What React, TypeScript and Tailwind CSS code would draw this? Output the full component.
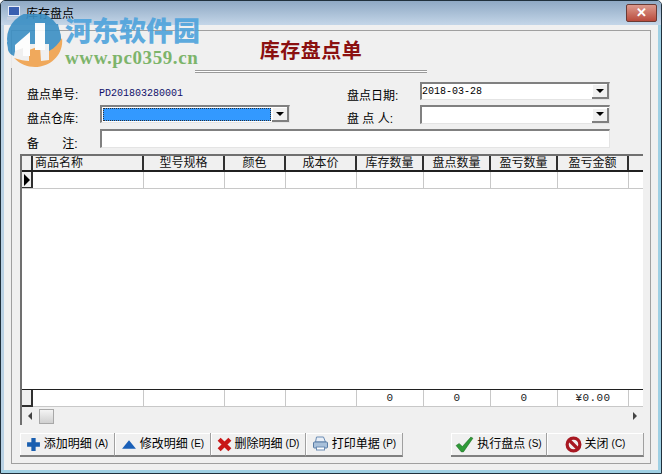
const font = "font-['Liberation_Sans','Noto_Sans_CJK_SC',sans-serif]";

const columns = [
  { label: "商品名称", width: "w-[111px]", align: "text-left pl-[2px]" },
  { label: "型号规格", width: "w-[81px]" },
  { label: "颜色", width: "w-[61px]" },
  { label: "成本价", width: "w-[71px]" },
  { label: "库存数量", width: "w-[67px]", total: "0" },
  { label: "盘点数量", width: "w-[67px]", total: "0" },
  { label: "盈亏数量", width: "w-[67px]", total: "0" },
  { label: "盈亏金额", width: "w-[71px]", total: "¥0.00" },
  { label: "", width: "w-[14px]" },
];

function DropArrow() {
  return (
    <span className="flex h-[15px] w-[17px] shrink-0 items-center justify-center border-r-2 border-b-2 border-r-[#808080] border-b-[#808080] bg-[#f0f0f0] shadow-[inset_1px_1px_0_#fff]">
      <span className="h-0 w-0 border-x-[4px] border-t-[4px] border-x-transparent border-t-black" />
    </span>
  );
}

function Sunken({ className, children }: { className: string; children?: React.ReactNode }) {
  return (
    <div className={`flex items-center border-t-2 border-l-2 border-t-[#808080] border-l-[#808080] border-r border-b border-r-[#e4e4e4] border-b-[#e4e4e4] bg-white ${className}`}>
      {children}
    </div>
  );
}

function Label({ text, className = "" }: { text: string; className?: string }) {
  return <span className={`w-[73px] shrink-0 whitespace-pre text-[12px] leading-[14px] text-black ${className}`}>{text}</span>;
}

function ToolButton({ icon, text, hotkey, width }: { icon: React.ReactNode; text: string; hotkey: string; width: string }) {
  return (
    <button className={`flex h-[24px] items-center justify-center gap-[3px] border-r border-b-2 border-r-[#a0a0a0] border-b-[#808080] bg-[#f0f0f0] shadow-[inset_1px_1px_0_#fff] ${width}`}>
      {icon}
      <span className="whitespace-pre text-[12px] leading-none text-black">{text}</span>
      <span className="whitespace-pre text-[10px] leading-none text-black">{hotkey}</span>
    </button>
  );
}

function Watermark() {
  return (
    <div className="pointer-events-none absolute top-[13px] left-[4px] flex items-start gap-[2px] opacity-90">
      <svg width="58" height="54" viewBox="0 0 58 54">
        <circle cx="29" cy="25" r="27" fill="#3b8fc4" />
        <path d="M0 30h58v24H0Z" fill="#f0f0f0" />
        <path d="M3 36c0-4-1-5-1-8h10l-3 14C6 41 4 39 3 36Z" fill="#3b8fc4" />
        <path d="M44 10h9l3 14-2 12-10 2Z" fill="#3b8fc4" />
        <path d="M57 24c2 16-11 29-27 29-8 0-15-3-21-9 6 2 11 3 15 3V36l11-4 1 15 8-1v-9c6-3 10-8 13-13Z" fill="#f0a24c" />
        <path d="M10 31 25 18v24h-7v-8l-8 3Z" fill="#fff" />
        <path d="M30 9h10v27H30Z" fill="#fff" />
      </svg>
      <div className="mt-[1px] flex flex-col">
        <span className="font-['Noto_Sans_CJK_SC',sans-serif] text-[27px] leading-[30px] font-black text-[#4ea3dc]">河东软件园</span>
        <span className="mt-[3px] font-['Liberation_Serif',serif] text-[19px] leading-[20px] font-bold tracking-[0.6px] text-[#71ae5c]">www.pc0359.cn</span>
      </div>
    </div>
  );
}

export default function App() {
  return (
    <div className={`relative flex h-[474px] w-[662px] flex-col overflow-hidden rounded-t-[5px] border border-[#20303c] bg-[#f0f0f0] shadow-[inset_-3px_-3px_0_#9fd0e4,inset_3px_0_0_#b9d1e4] ${font}`}>
      {/* Title bar */}
      <div className="flex h-[24px] shrink-0 items-center bg-gradient-to-b from-[#8fa9c4] to-[#c4d6e8] pr-[4px] pl-[5px]">
        <svg width="16" height="16" viewBox="0 0 16 16">
          <rect x="2.5" y="1.5" width="11" height="9" fill="#3a5fb0" stroke="#e6ebf8" />
          <path d="M1 12h14l1 3H1z" fill="#c7cfe0" />
        </svg>
        <span className="mt-[2px] ml-[4px] text-[12px] leading-none text-black">库存盘点</span>
        <button className="mt-[-1px] ml-auto flex h-[18px] w-[31px] items-center justify-center rounded-[2px] border border-[#6a3a34] bg-gradient-to-b from-[#dc9a8e] to-[#b84a3c] font-['Liberation_Sans',sans-serif] text-[13px] leading-none font-bold text-white">
          ✕
        </button>
      </div>

      {/* Form body */}
      <div className="flex flex-1 flex-col px-[10px] pt-[5px] pb-[9px]">
        <div className="flex flex-1 flex-col border border-[#a0a0a0] pr-[7px] pl-[8px]">
          <div className="ml-[175px] w-[232px]">
            <div className="flex h-[39px] items-start justify-center pt-[8px]">
              <span className="text-[20px] leading-[24px] font-bold tracking-[0.5px] text-[#8b1010]">库存盘点单</span>
            </div>
            <div className="h-[3px] border-y border-y-[#9a9a9a] bg-white" />
          </div>

          <div className="mt-[9px] flex h-[23px] pl-[7px]">
            <div className="flex w-[320px] items-start pt-[6px]">
              <Label text="盘点单号:" />
              <span className="mt-[1px] ml-[-1px] font-['Liberation_Mono',monospace] text-[10px] leading-none text-[#10106a]">PD201803280001</span>
            </div>
            <div className="flex items-start">
              <Label text="盘点日期:" className="mt-[7px]" />
              <Sunken className="h-[18px] w-[190px]">
                <span className="flex-1 font-['Liberation_Mono',monospace] text-[10px] leading-none text-black">2018-03-28</span>
                <DropArrow />
              </Sunken>
            </div>
          </div>

          <div className="flex h-[24px] pl-[7px]">
            <div className="flex w-[320px] items-start">
              <Label text="盘点仓库:" className="mt-[7px]" />
              <Sunken className="h-[18px] w-[190px]">
                <span className="mx-[1px] h-[13px] flex-1 border border-dotted border-[#333] bg-[#3399ff]" />
                <DropArrow />
              </Sunken>
            </div>
            <div className="flex items-start">
              <Label text="盘 点 人:" className="mt-[7px]" />
              <Sunken className="h-[19px] w-[190px] justify-end">
                <DropArrow />
              </Sunken>
            </div>
          </div>

          <div className="flex h-[19px] items-start pl-[7px]">
            <Label text="备       注:" className="mt-[8px]" />
            <Sunken className="h-[19px] w-[510px]" />
          </div>

          {/* Grid */}
          <div className="mt-[6px] flex h-[271px] w-[623px] flex-col border-t-2 border-l-2 border-t-[#707070] border-l-[#707070] bg-white">
            <div className="flex h-[16px] shrink-0 border-b-2 border-b-[#202020] bg-[#f0f0f0] text-[12px] leading-[14px] text-[#111]">
              <div className="w-[11px] shrink-0 border-r-2 border-r-[#303030]" />
              {columns.map((col) => (
                <div key={col.label} className={`${col.width} shrink-0 overflow-hidden border-r-2 border-r-[#303030] text-center last:border-r-0 ${col.align ?? ""}`}>
                  {col.label}
                </div>
              ))}
            </div>
            <div className="flex h-[17px] shrink-0 border-b border-b-[#c8c8c8]">
              <div className="flex w-[11px] shrink-0 items-center justify-center border-r-2 border-b border-r-[#303030] border-b-[#303030] bg-[#f0f0f0]">
                <span className="h-0 w-0 border-y-[6px] border-l-[6px] border-y-transparent border-l-black" />
              </div>
              {columns.map((col) => (
                <div key={col.label} className={`${col.width} shrink-0 border-r border-r-[#c8c8c8] last:border-r-0`} />
              ))}
            </div>
            <div className="flex-1" />
            <div className="flex h-[18px] shrink-0 border-t border-b border-t-[#202020] border-b-[#c8c8c8] text-[11px] leading-[16px] text-[#222]">
              <div className="h-[17px] w-[11px] shrink-0 border-r-2 border-b-2 border-r-[#303030] border-b-[#303030] bg-[#f0f0f0]" />
              {columns.map((col) => (
                <div key={col.label} className={`${col.width} shrink-0 border-r border-r-[#c8c8c8] text-center font-['Liberation_Mono',monospace] tracking-[0.4px] last:border-r-0`}>
                  {col.total}
                </div>
              ))}
            </div>
            <div className="flex h-[18px] shrink-0 items-center justify-between bg-[#f0f0f0] px-[6px]">
              <span className="h-0 w-0 border-y-[4px] border-r-[4px] border-y-transparent border-r-[#444]" />
              <span className="mr-auto ml-[7px] h-[15px] w-[15px] border border-[#a8a8a8] bg-gradient-to-b from-[#f4f4f4] to-[#d0d0d0]" />
              <span className="h-0 w-0 border-y-[4px] border-l-[4px] border-y-transparent border-l-[#444]" />
            </div>
          </div>

          {/* Toolbar */}
          <div className="mt-[8px] flex items-center">
            <ToolButton
              width="w-[95px]"
              text="添加明细"
              hotkey="(A)"
              icon={
                <svg width="15" height="15" viewBox="0 0 14 14">
                  <path d="M5 1h4v4h4v4H9v4H5V9H1V5h4Z" fill="#1a5fb0" />
                </svg>
              }
            />
            <ToolButton
              width="w-[96px]"
              text="修改明细"
              hotkey="(E)"
              icon={
                <svg width="16" height="11" viewBox="0 0 15 10">
                  <path d="M7.5 1 14 9H1Z" fill="#1a60b8" />
                </svg>
              }
            />
            <ToolButton
              width="w-[95px]"
              text="删除明细"
              hotkey="(D)"
              icon={
                <svg width="15" height="15" viewBox="0 0 14 14">
                  <path d="M2 2l10 10M12 2 2 12" stroke="#c81818" strokeWidth="4" />
                </svg>
              }
            />
            <ToolButton
              width="w-[97px]"
              text="打印单据"
              hotkey="(P)"
              icon={
                <svg width="17" height="16" viewBox="0 0 16 16">
                  <path d="M4 1h7l2 5H3Z" fill="#e8eef6" stroke="#6a8cb4" />
                  <rect x="1" y="6" width="14" height="6" rx="1" fill="#a8c0da" stroke="#5a7ca4" />
                  <rect x="4" y="11" width="8" height="3" fill="#fff" stroke="#6a8cb4" />
                </svg>
              }
            />
            <div className="mr-[-1px] ml-auto flex">
              <ToolButton
                width="w-[96px]"
                text="执行盘点"
                hotkey="(S)"
                icon={
                  <svg width="19" height="17" viewBox="0 0 18 16">
                    <path d="M1 9l3-2 3 3 8-9 2 1-9 13h-2Z" fill="#2f9a38" stroke="#1e6a26" strokeWidth="0.5" />
                  </svg>
                }
              />
              <ToolButton
                width="w-[97px]"
                text="关闭"
                hotkey="(C)"
                icon={
                  <svg width="17" height="17" viewBox="0 0 16 16">
                    <circle cx="8" cy="8" r="6" fill="none" stroke="#a81822" strokeWidth="3" />
                    <path d="M4 4l8 8" stroke="#a81822" strokeWidth="3" />
                  </svg>
                }
              />
            </div>
          </div>
        </div>
      </div>

      <Watermark />
    </div>
  );
}
